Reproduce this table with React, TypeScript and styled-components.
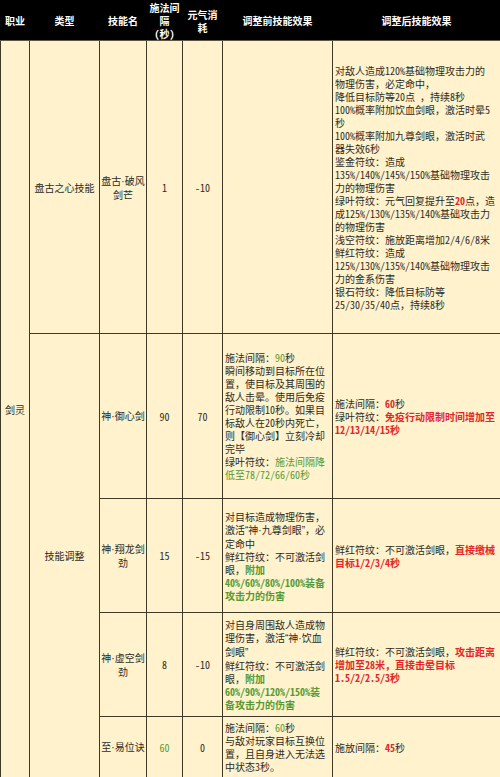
import React from 'react';
import styled, { createGlobalStyle } from 'styled-components';

const Global = createGlobalStyle`
  html, body { margin: 0; padding: 0; background: #fff; }
`;

type Tone = 'g' | 'gb' | 'r';
type Seg = string | { t: string; c: Tone };
type Line = Seg[];

interface SkillRow {
  name: string[];
  cd: Seg;
  cost: string;
  before: Line[];
  after: Line[];
  h: number;
}

const rows: SkillRow[] = [
  {
    name: ['盘古·破风', '剑芒'],
    cd: '1',
    cost: '-10',
    before: [],
    after: [
      ['对敌人造成120%基础物理攻击力的'],
      ['物理伤害，必定命中，'],
      ['降低目标防等20点 ，持续8秒'],
      ['100%概率附加饮血剑眼，激活时晕5'],
      ['秒'],
      ['100%概率附加九尊剑眼，激活时武'],
      ['器失效6秒'],
      ['鉴金符纹：造成'],
      ['135%/140%/145%/150%基础物理攻击'],
      ['力的物理伤害'],
      ['绿叶符纹：元气回复提升至', { t: '20', c: 'r' }, '点，造'],
      ['成125%/130%/135%/140%基础攻击力'],
      ['的物理伤害'],
      ['浅空符纹：施放距离增加2/4/6/8米'],
      ['鲜红符纹：造成'],
      ['125%/130%/135%/140%基础物理攻击'],
      ['力的金系伤害'],
      ['银石符纹：降低目标防等'],
      ['25/30/35/40点，持续8秒'],
    ],
    h: 293,
  },
  {
    name: ['神·御心剑'],
    cd: '90',
    cost: '70',
    before: [
      ['施法间隔：', { t: '90', c: 'g' }, '秒'],
      ['瞬间移动到目标所在位'],
      ['置，使目标及其周围的'],
      ['敌人击晕。使用后免疫'],
      ['行动限制10秒。如果目'],
      ['标敌人在20秒内死亡，'],
      ['则【御心剑】立刻冷却'],
      ['完毕'],
      ['绿叶符纹：', { t: '施法间隔降', c: 'g' }],
      [{ t: '低至78/72/66/60秒', c: 'g' }],
    ],
    after: [
      ['施法间隔：', { t: '60', c: 'r' }, '秒'],
      ['绿叶符纹：', { t: '免疫行动限制时间增加至', c: 'r' }],
      [{ t: '12/13/14/15秒', c: 'r' }],
    ],
    h: 165,
  },
  {
    name: ['神·翔龙剑', '劲'],
    cd: '15',
    cost: '-15',
    before: [
      ['对目标造成物理伤害，'],
      ['激活“神·九尊剑眼”，必'],
      ['定命中'],
      ['鲜红符纹：不可激活剑'],
      ['眼，', { t: '附加', c: 'gb' }],
      [{ t: '40%/60%/80%/100%装备', c: 'gb' }],
      [{ t: '攻击力的伤害', c: 'gb' }],
    ],
    after: [
      ['鲜红符纹：不可激活剑眼，', { t: '直接缴械', c: 'r' }],
      [{ t: '目标1/2/3/4秒', c: 'r' }],
    ],
    h: 114,
  },
  {
    name: ['神·虚空剑', '劲'],
    cd: '8',
    cost: '-10',
    before: [
      ['对自身周围敌人造成物'],
      ['理伤害，激活“神·饮血'],
      ['剑眼”'],
      ['鲜红符纹：不可激活剑'],
      ['眼，', { t: '附加', c: 'gb' }],
      [{ t: '60%/90%/120%/150%装', c: 'gb' }],
      [{ t: '备攻击力的伤害', c: 'gb' }],
    ],
    after: [
      ['鲜红符纹：不可激活剑眼，', { t: '攻击距离', c: 'r' }],
      [{ t: '增加至28米，直接击晕目标', c: 'r' }],
      [{ t: '1.5/2/2.5/3秒', c: 'r' }],
    ],
    h: 104,
  },
  {
    name: ['至·易位诀'],
    cd: { t: '60', c: 'g' },
    cost: '0',
    before: [
      ['施法间隔：', { t: '60', c: 'g' }, '秒'],
      ['与敌对玩家目标互换位'],
      ['置，且自身进入无法选'],
      ['中状态3秒。'],
    ],
    after: [['施放间隔：', { t: '45', c: 'r' }, '秒']],
    h: 61,
  },
];

const Table = styled.table`
  width: 500px;
  border-collapse: collapse;
  table-layout: fixed;
  font-family: 'Noto Sans CJK SC', 'Noto Sans', sans-serif;
  font-size: 10px;
  line-height: 13px;
  color: #2d2b25;
  background: #fff2cc;
`;

const HeadRow = styled.tr`
  height: 39px;
`;

const Th = styled.th`
  background: #000;
  color: #fff;
  font-weight: bold;
  padding: 0 1px;
  border: 1px solid #000;
  border-bottom: 1px solid #5d5840;
  text-align: center;
  vertical-align: middle;
`;

const BodyRow = styled.tr<{ $h: number }>`
  height: ${(p) => p.$h}px;
`;

const Td = styled.td<{ $left?: boolean; $tight?: boolean }>`
  border: 1px solid #3d3a28;
  padding: 0 ${(p) => (p.$tight ? 1 : 2)}px;
  vertical-align: middle;
  text-align: ${(p) => (p.$left ? 'left' : 'center')};
  overflow: visible;
`;

const LineBox = styled.span`
  display: block;
  white-space: nowrap;
`;

/* Latin runs: half-width glyphs, as in the original sheet's font */
const Half = styled.span`
  font-feature-settings: 'hwid' 1;
`;

/* middle dot and curly quotes: narrow proportional forms */
const Narrow = styled.span`
  font-family: 'Liberation Sans', sans-serif;
`;

const Mark = styled.span<{ $c: Tone }>`
  color: ${(p) => (p.$c === 'r' ? '#e3262a' : '#559a36')};
  font-weight: ${(p) => (p.$c === 'g' ? 'normal' : 'bold')};
`;

const renderText = (s: string) =>
  s
    .split(/([\x20-\x7E]+|[·“”]+)/)
    .filter(Boolean)
    .map((part, j) =>
      /^[\x20-\x7E]+$/.test(part) ? (
        <Half key={j}>{part}</Half>
      ) : /^[·“”]+$/.test(part) ? (
        <Narrow key={j}>{part}</Narrow>
      ) : (
        <React.Fragment key={j}>{part}</React.Fragment>
      )
    );

const renderSeg = (s: Seg, i: number) =>
  typeof s === 'string' ? (
    <React.Fragment key={i}>{renderText(s)}</React.Fragment>
  ) : (
    <Mark key={i} $c={s.c}>
      {renderText(s.t)}
    </Mark>
  );

const Lines = ({ lines }: { lines: Line[] }) => (
  <>
    {lines.map((l, i) => (
      <LineBox key={i}>{l.map(renderSeg)}</LineBox>
    ))}
  </>
);

const headers: { w: number; lines: string[] }[] = [
  { w: 29, lines: ['职业'] },
  { w: 70, lines: ['类型'] },
  { w: 47, lines: ['技能名'] },
  { w: 36, lines: ['施法间', '隔', '(秒)'] },
  { w: 40, lines: ['元气消', '耗'] },
  { w: 110, lines: ['调整前技能效果'] },
  { w: 168, lines: ['调整后技能效果'] },
];

export default function App() {
  return (
    <>
      <Global />
      <Table>
        <colgroup>
          {headers.map((h, i) => (
            <col key={i} style={{ width: h.w }} />
          ))}
        </colgroup>
        <thead>
          <HeadRow>
            {headers.map((h, i) => (
              <Th key={i}>
                <Lines lines={h.lines.map((t) => [t])} />
              </Th>
            ))}
          </HeadRow>
        </thead>
        <tbody>
          {rows.map((r, i) => (
            <BodyRow key={i} $h={r.h}>
              {i === 0 && <Td rowSpan={rows.length}>剑灵</Td>}
              {i === 0 && <Td>盘古之心技能</Td>}
              {i === 1 && <Td rowSpan={rows.length - 1}>技能调整</Td>}
              <Td $tight>
                <Lines lines={r.name.map((t) => [t])} />
              </Td>
              <Td>{renderSeg(r.cd, 0)}</Td>
              <Td>{renderText(r.cost)}</Td>
              <Td $left>
                <Lines lines={r.before} />
              </Td>
              <Td $left>
                <Lines lines={r.after} />
              </Td>
            </BodyRow>
          ))}
        </tbody>
      </Table>
    </>
  );
}
